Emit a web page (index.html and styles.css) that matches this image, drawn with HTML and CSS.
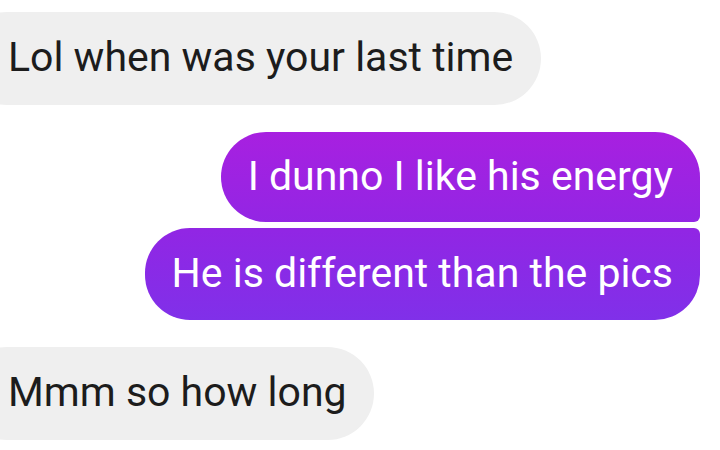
FILE: index.html
```html
<!DOCTYPE html>
<html>
<head>
<meta charset="utf-8">
<link rel="stylesheet" href="styles.css">
</head>
<body>
<div class="thread">
  <div class="msg in first"><span>Lol when was your last time</span></div>
  <div class="group">
    <div class="msg out top"><span>I dunno I like his energy</span></div>
    <div class="msg out bottom"><span>He is different than the pics</span></div>
  </div>
  <div class="msg in last"><span>Mmm so how long</span></div>
</div>
</body>
</html>
```
FILE: styles.css
```css
html, body {
  margin: 0;
  padding: 0;
  background: #ffffff;
  width: 720px;
  height: 450px;
  overflow: hidden;
}
.thread {
  display: flex;
  flex-direction: column;
  font-family: Roboto, "Noto Sans", sans-serif;
  font-size: 41px;
  padding-top: 12px;
}
.msg {
  height: 93px;
  box-sizing: border-box;
  display: flex;
  align-items: center;
  line-height: 1;
}
.msg span { display: block; margin-top: -2px; }
.in {
  align-self: flex-start;
  background: #efefef;
  color: #1c1c1c;
  border-radius: 47px;
  margin-left: -40px;
  padding-left: 48px;
}
.first { padding-right: 28px; }
.last { margin-top: 27px; padding-right: 27px; }
.group {
  align-self: flex-end;
  display: flex;
  flex-direction: column;
  align-items: flex-end;
  gap: 6px;
  margin-top: 27px;
  margin-right: 20px;
}
.out {
  color: #ffffff;
  background-attachment: fixed;
  background-image: linear-gradient(180deg, #a820e0 130px, #9126e4 230px, #8030e9 320px);
  padding: 0 27px;
}
.top {
  height: 90px;
  border-radius: 45px 45px 6px 45px;
}
.bottom {
  height: 92px;
  border-radius: 45px 6px 45px 45px;
}
```
